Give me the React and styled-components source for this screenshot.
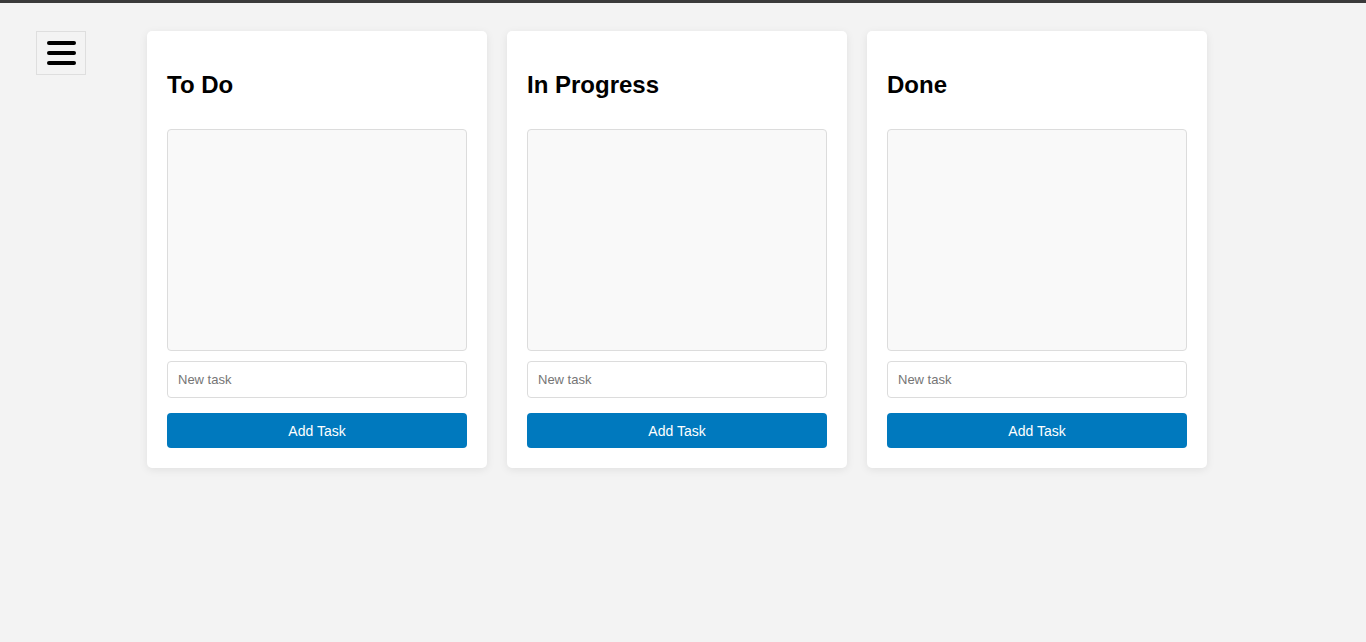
import styled, { createGlobalStyle } from 'styled-components';

const GlobalStyle = createGlobalStyle`
  html, body {
    margin: 0;
    padding: 0;
    background: #f3f3f3;
    font-family: "Liberation Sans", Arial, sans-serif;
  }
`;

const Page = styled.div`
  min-height: 642px;
  box-sizing: border-box;
  border-top: 3px solid #3a3a3a;
  padding: 28px 36px;
  display: flex;
  align-items: flex-start;
  gap: 61px;
`;

const MenuButton = styled.button`
  width: 50px;
  height: 44px;
  padding: 0;
  background: #f3f3f3;
  border: 1px solid #dedede;
  display: flex;
  flex-direction: column;
  align-items: center;
  justify-content: center;
  gap: 6px;
  cursor: pointer;
`;

const Bar = styled.span`
  display: block;
  width: 29px;
  height: 4px;
  border-radius: 2px;
  background: #000;
`;

const Board = styled.div`
  display: flex;
  gap: 20px;
`;

const Column = styled.section`
  width: 340px;
  box-sizing: border-box;
  padding: 20px;
  background: #fff;
  border-radius: 5px;
  box-shadow: 0 2px 8px rgba(0, 0, 0, 0.08);
`;

const Title = styled.h2`
  margin: 20px 0 30px;
  font-size: 24px;
  font-weight: bold;
  color: #000;
`;

const TaskList = styled.ul`
  list-style: none;
  margin: 0 0 10px;
  padding: 0;
  height: 222px;
  box-sizing: border-box;
  background: #f9f9f9;
  border: 1px solid #dcdcdc;
  border-radius: 4px;
`;

const TaskInput = styled.input`
  display: block;
  width: 100%;
  height: 37px;
  box-sizing: border-box;
  padding: 0 10px;
  border: 1px solid #dcdcdc;
  border-radius: 4px;
  font-family: inherit;
  font-size: 13px;
  color: #333;
  &::placeholder {
    color: #757575;
  }
`;

const AddButton = styled.button`
  display: block;
  width: 100%;
  height: 35px;
  margin-top: 15px;
  border: none;
  border-radius: 4px;
  background: #0079be;
  color: #fff;
  font-family: inherit;
  font-size: 14px;
  cursor: pointer;
`;

const columns = ['To Do', 'In Progress', 'Done'];

export default function App() {
  return (
    <>
      <GlobalStyle />
      <Page>
        <MenuButton aria-label="menu">
          <Bar />
          <Bar />
          <Bar />
        </MenuButton>
        <Board>
          {columns.map((name) => (
            <Column key={name}>
              <Title>{name}</Title>
              <TaskList />
              <TaskInput placeholder="New task" />
              <AddButton>Add Task</AddButton>
            </Column>
          ))}
        </Board>
      </Page>
    </>
  );
}
